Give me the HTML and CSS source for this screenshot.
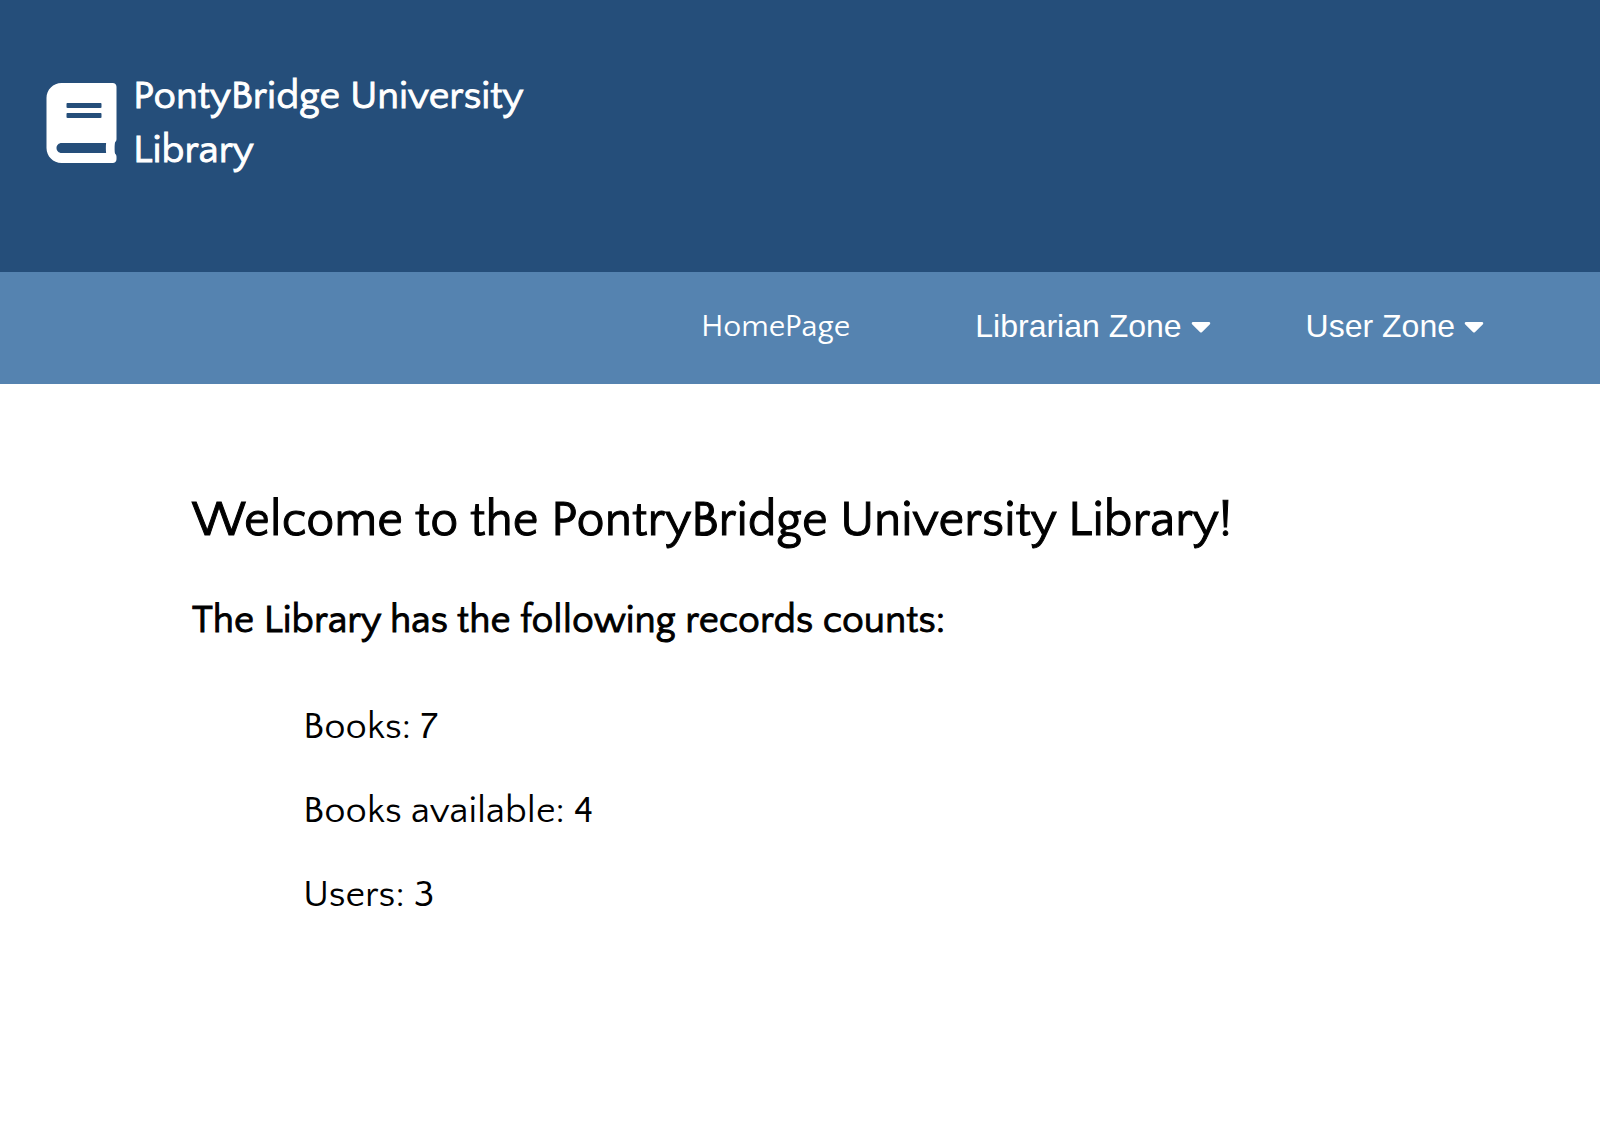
FILE: index.html
```html
<!DOCTYPE html>
<html lang="en">
<head>
<meta charset="utf-8">
<meta name="viewport" content="width=device-width, initial-scale=1">
<title>PontyBridge University Library</title>
<link rel="stylesheet" href="styles.css">
</head>
<body>
<header class="header">
  <div class="brand">
    <svg class="brand-icon" viewBox="0 0 448 512" aria-hidden="true"><path fill="currentColor" d="M448 360V24c0-13.3-10.7-24-24-24H96C43 0 0 43 0 96v320c0 53 43 96 96 96h328c13.3 0 24-10.7 24-24v-16c0-7.5-3.5-14.3-8.9-18.7-4.2-15.4-4.2-59.3 0-74.7 5.4-4.3 8.9-11.1 8.9-18.6zM128 134c0-3.3 2.7-6 6-6h212c3.3 0 6 2.7 6 6v20c0 3.3-2.7 6-6 6H134c-3.3 0-6-2.7-6-6v-20zm0 64c0-3.3 2.7-6 6-6h212c3.3 0 6 2.7 6 6v20c0 3.3-2.7 6-6 6H134c-3.3 0-6-2.7-6-6v-20zm253.4 250H96c-17.7 0-32-14.3-32-32 0-17.6 14.4-32 32-32h285.4c-1.9 17.1-1.9 46.9 0 64z"/></svg>
    <span class="brand-name">PontyBridge University Library</span>
  </div>
</header>
<nav class="nav">
  <a class="nav-link" href="#">HomePage</a>
  <button class="nav-button" type="button">Librarian Zone
    <svg class="caret" viewBox="0 0 320 512" aria-hidden="true"><path fill="currentColor" d="M31.3 192h257.3c17.8 0 26.7 21.5 14.1 34.1L174.1 354.7c-7.8 7.8-20.5 7.8-28.3 0L17.2 226.1C4.6 213.5 13.5 192 31.3 192z"/></svg>
  </button>
  <button class="nav-button" type="button">User Zone
    <svg class="caret" viewBox="0 0 320 512" aria-hidden="true"><path fill="currentColor" d="M31.3 192h257.3c17.8 0 26.7 21.5 14.1 34.1L174.1 354.7c-7.8 7.8-20.5 7.8-28.3 0L17.2 226.1C4.6 213.5 13.5 192 31.3 192z"/></svg>
  </button>
</nav>
<main class="content">
  <h1 class="welcome">Welcome to the PontryBridge University Library!</h1>
  <h2 class="summary">The Library has the following records counts:</h2>
  <ul class="counts">
    <li>Books: 7</li>
    <li>Books available: 4</li>
    <li>Users: 3</li>
  </ul>
</main>
</body>
</html>
```

FILE: styles.css
```css
* {
  box-sizing: border-box;
}

body {
  margin: 0;
  background: #fff;
  color: #000;
  font-family: "Quattrocento Sans", Lato, sans-serif;
  font-size: 38px;
}

.header {
  min-height: 272px;
  padding: 69px 46px;
  background: #254e7a;
  color: #fff;
}

.brand {
  display: flex;
  align-items: center;
  gap: 16px;
  max-width: 500px;
}

.brand-icon {
  flex: none;
  width: 71px;
  height: 80px;
}

/* Headings use the regular cut, thickened slightly to a medium weight. */
.brand-name,
.welcome,
.summary {
  font-weight: 400;
  -webkit-text-stroke: 1px currentColor;
}

.brand-name {
  font-size: 40px;
  line-height: 54px;
}

.nav {
  display: flex;
  justify-content: flex-end;
  align-items: center;
  min-height: 112px;
  padding: 0 116px 4px;
  background: #5583b0;
  color: #fff;
}

.nav-link {
  margin-right: 125px;
  color: inherit;
  font-size: 32px;
  text-decoration: none;
}

.nav-button {
  display: flex;
  align-items: center;
  gap: 9px;
  padding: 0;
  border: 0;
  background: none;
  color: inherit;
  font: 32px/36px "Liberation Sans", Arial, sans-serif;
}

.nav-button + .nav-button {
  margin-left: 95px;
}

.caret {
  width: 20px;
  height: 32px;
}

.content {
  padding: 105px 192px;
}

.welcome {
  margin: 0;
  font-size: 50px;
  line-height: 64px;
}

.summary {
  margin: 41px 0 52px;
  font-size: 39px;
  line-height: 54px;
}

.counts {
  display: flex;
  flex-direction: column;
  gap: 30px;
  margin: 0;
  padding: 0 0 0 111px;
  line-height: 54px;
  list-style: none;
}
```
